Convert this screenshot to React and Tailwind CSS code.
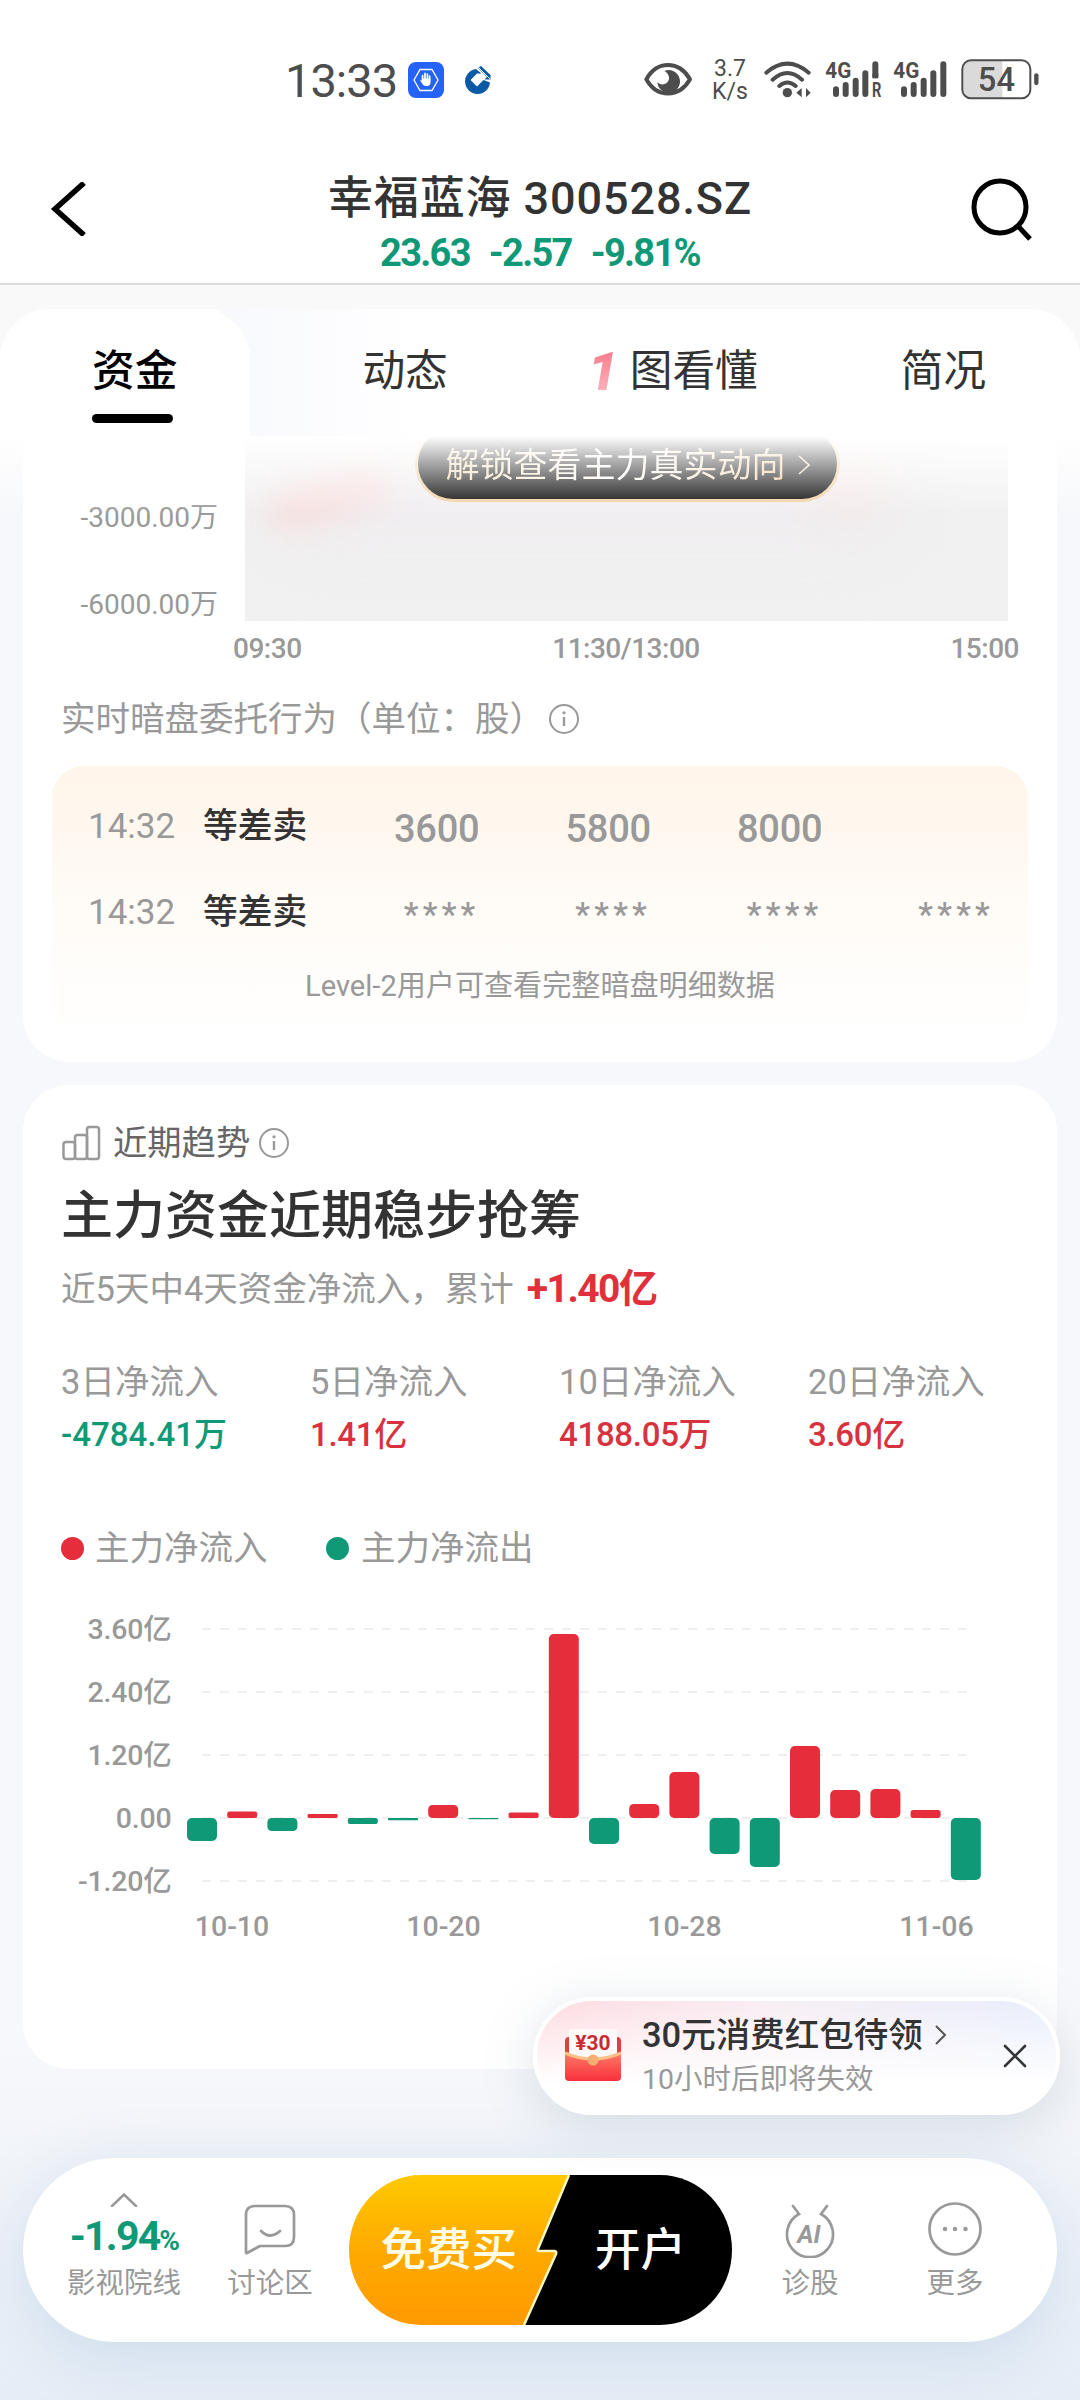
import React from 'react';

const tabs = [
  { name: '资金', className: 'font-medium text-black' },
  { name: '动态', className: 'ml-[185px]' },
  { name: '图看懂', className: '' },
  { name: '简况', className: 'ml-[143px]' },
];

const orders = [
  { id: 1, time: '14:32', type: '等差卖', values: ['3600', '5800', '8000', ''] },
  { id: 2, time: '14:32', type: '等差卖', values: ['****', '****', '****', '****'] },
];

const stats = [
  { label: '3日净流入', value: '-4784.41万', up: false },
  { label: '5日净流入', value: '1.41亿', up: true },
  { label: '10日净流入', value: '4188.05万', up: true },
  { label: '20日净流入', value: '3.60亿', up: true },
];

// bar heights in px, negative = outflow
const flows = [-23, 6.5, -13, 4, -6, -2.3, 13, -1.3, 5.5, 184, -26, 14, 46, -36, -49, 72, 28, 29, 8, -62];
const yLabels = ['3.60亿', '2.40亿', '1.20亿', '0.00', '-1.20亿'];

const InfoIcon = () => (
  <svg width="32" height="32" viewBox="0 0 32 32" fill="none" stroke="#999" strokeWidth="2">
    <circle cx="16" cy="16" r="14" />
    <path d="M16 14v9" strokeWidth="2.4" />
    <circle cx="16" cy="9.8" r="1.6" fill="#999" stroke="none" />
  </svg>
);

const SignalIcon = ({ roaming }) => (
  <svg width="60" height="46" viewBox="582 50 180 138" fill="none" stroke="#4d4d4d" strokeWidth="18" strokeLinecap="round">
    <text x="586" y="113" fontSize="68" fontWeight="700" fill="#4d4d4d" stroke="none" textLength="78" lengthAdjust="spacingAndGlyphs">4G</text>
    <path d="M618 147v14M647 134v27M677 121v40M706 99v62" />
    {roaming ? (
      <>
        <path d="M736 72v33" />
        <path d="M736 100v14" strokeLinecap="butt" />
        <text x="726" y="171" fontSize="60" fontWeight="700" fill="#4d4d4d" stroke="none" textLength="28" lengthAdjust="spacingAndGlyphs">R</text>
      </>
    ) : (
      <path d="M736 72v89" />
    )}
  </svg>
);

const StatusBar = () => (
  <div className="flex h-[160px] items-start pt-[57px] pl-[285px] pr-10 text-[#4d4d4d]">
    <div className="flex h-[46px] items-center">
      <span className="w-[123px] text-[47px] leading-none tracking-[-1px]">13:33</span>
      <svg width="36" height="36" viewBox="0 0 36 36" fill="none">
        <rect width="36" height="36" rx="8" fill="#2463f5" />
        <path d="M12 7.5h12l6 10.5-6 10.5H12L6 18z" stroke="#fff" strokeWidth="1.3" />
        <path d="M14.6 18v-4.5M17 17v-5.6M19.4 17v-5M21.6 18v-4" stroke="#fff" strokeWidth="1.7" strokeLinecap="round" />
        <path d="M13.7 16.5h8.8v4.2c0 2-1.3 3.2-3 3.2h-1.8c-1.8 0-2.6-1-3.5-2.2l-2-3.2c.6-.8 1.5-.2 1.900.5z" fill="#fff" />
      </svg>
      <svg width="28" height="30" viewBox="0 0 28 30" className="ml-5">
        <path d="M26 17.5A12.5 12.5 0 1 1 12 4l5.5 4.5H13L6.500 15l6.500 6.500L19.500 15z" fill="#0a5aa6" />
        <path d="M14 3l3-2 9.500 9v4.500h-6L23 12z" fill="#0a5aa6" />
        <path d="M14.500 2.500L26 14" stroke="#fff" strokeWidth="1" />
      </svg>
    </div>
    <div className="ml-auto flex h-[46px] items-center">
      <svg width="50" height="46" viewBox="40 50 150 138" fill="none">
        <path d="M50 117C82 60 148 60 181 117C148 174 82 174 50 117z" stroke="#4d4d4d" strokeWidth="12" strokeLinejoin="round" />
        <path d="M104 92a34 34 0 1 1-21 33c6 9 22 10 30 1 9-10 6-26-9-34z" fill="#4d4d4d" />
      </svg>
      <div className="ml-[17px] w-10 text-center text-[23px] leading-[23px]">
        <div>3.7</div>
        <div>K/s</div>
      </div>
      <svg width="50" height="46" viewBox="396 50 150 138" fill="none" stroke="#4d4d4d" strokeWidth="12" strokeLinecap="round" className="ml-3">
        <path d="M409 97Q472 43 536 97M428 118Q472 78 516 118M448 137Q472 116 497 137" />
        <circle cx="472" cy="157" r="14" fill="#4d4d4d" stroke="none" />
        <path d="M499 157l16-14v28zM528 143l14 14-14 14z" fill="#4d4d4d" stroke="none" />
      </svg>
      <div className="ml-3"><SignalIcon roaming /></div>
      <div className="ml-2"><SignalIcon /></div>
      <svg width="80" height="46" viewBox="990 50 240 138" className="ml-2">
        <path d="M1020 62h97v111h-97q-20 0-20-22V84q0-22 20-22z" fill="#dadada" />
        <rect x="997" y="60" width="204" height="114" rx="26" fill="none" stroke="#4d4d4d" strokeWidth="6" />
        <text x="1043" y="152" fontSize="98" fontWeight="500" fill="#4d4d4d" textLength="112">54</text>
        <path d="M1219 105v23" stroke="#4d4d4d" strokeWidth="13" strokeLinecap="round" />
      </svg>
    </div>
  </div>
);

const Header = () => (
  <div className="grid h-[125px] grid-cols-[120px_1fr_120px] items-start border-b-2 border-[#dcdcdc]">
    <svg width="36" height="54" viewBox="0 0 36 54" fill="none" className="ml-[50px] mt-[22px]">
      <path d="M34 1L5 27l29 26" stroke="#000" strokeWidth="5.500" />
    </svg>
    <div className="flex flex-col items-center pt-[13px]">
      <div className="text-[45px] font-medium leading-[52px] tracking-[0.900px] text-[#333]">幸福蓝海 300528.SZ</div>
      <div className="mt-[10px] flex gap-[19px] text-[38px] font-bold leading-[36px] tracking-[-1.700px] text-[#0f9977]">
        <span>23.63</span>
        <span>-2.57</span>
        <span>-9.81%</span>
      </div>
    </div>
    <svg width="62" height="64" viewBox="0 0 62 64" fill="none" stroke="#000" strokeWidth="5" className="ml-[11px] mt-[18px]">
      <circle cx="29" cy="29" r="26" />
      <path d="M46 47l13 14" />
    </svg>
  </div>
);

const TabBar = () => (
  <div className="relative z-20 mt-6 h-[127px] rounded-t-[50px] bg-white text-[42.700px] leading-none text-[#333]">
    <div className="absolute left-[220px] top-0 h-[127px] w-[200px] bg-linear-to-r from-[#f8f9fd] to-white"></div>
    <div className="absolute left-0 top-0 h-[127px] w-[250px] rounded-t-[50px] bg-white"></div>
    <div className="relative flex pl-[92px] pt-[41px]">
      {tabs.map((tab, i) => (
        <div key={tab.name} className={tab.className}>
          {i === 2 ? (
            <div className="ml-[140px] flex">
              <span className="w-[42px] bg-linear-to-b from-[#f67a8c] to-[#fbb4be] bg-clip-text text-[54px] font-black italic leading-[44px] text-transparent">1</span>
              {tab.name}
            </div>
          ) : (
            <div>{tab.name}</div>
          )}
          {i === 0 && <div className="mt-[21px] h-[9px] w-[81px] rounded-full bg-black"></div>}
        </div>
      ))}
    </div>
  </div>
);

const OrderCard = () => (
  <div className="relative mx-[23px] h-[626px] rounded-b-[46px] bg-white text-[#999]">
    <div className="flex h-[185px] pr-[49px]">
      <div className="w-[195px] shrink-0 pt-[38px] text-right text-[28px] leading-[87px]">
        <div>-3000.00万</div>
        <div>-6000.00万</div>
      </div>
      <div className="relative ml-[27px] flex-1 overflow-hidden bg-[#f1f1f1]">
        <div className="absolute left-[40px] top-[10px] h-[80px] w-[600px] bg-[#f1ebf0] blur-2xl"></div>
        <div className="absolute left-[20px] top-[36px] h-[44px] w-[130px] -rotate-20 rounded-full bg-[#f6dfdd] blur-lg"></div>
        <div className="absolute left-[570px] top-[10px] h-[60px] w-[70px] rounded-full bg-[#f8e6e3] blur-xl"></div>
        <div className="absolute -top-[10px] left-[170px] flex h-[76px] w-[425px] items-center justify-center gap-3 rounded-full border-[3px] border-[#efcf9f] bg-black pt-[2px]">
          <span className="bg-linear-to-r from-[#f2d3a2] via-white to-[#eec48c] bg-clip-text text-[34px] leading-[40px] text-transparent">解锁查看主力真实动向</span>
          <svg width="12" height="20" viewBox="0 0 12 20" fill="none" stroke="#f0d9b5" strokeWidth="1.600">
            <path d="M1 1l10 9-10 9" />
          </svg>
        </div>
      </div>
    </div>
    <div className="ml-[210px] mr-[38px] flex h-[56px] items-center justify-between text-[28px] font-medium leading-none tracking-[-0.500px]">
      <span>09:30</span>
      <span>11:30/13:00</span>
      <span>15:00</span>
    </div>
    <div className="flex h-[84px] items-center gap-1 pl-[38px] text-[34.500px] leading-none">
      <span>实时暗盘委托行为（单位：股）</span>
      <InfoIcon />
    </div>
    <div className="mx-[29px] mt-[5px] h-[274px] rounded-[32px] bg-linear-to-b from-[#fff5ea] via-[#fffbf6] via-50% to-white pt-[17px]">
      {orders.map((o) => (
        <div key={o.id} className="flex h-[86px] items-center pl-[36px] leading-none">
          <span className="w-[115px] text-[35px]">{o.time}</span>
          <span className="w-[105px] text-[34.700px] font-medium text-[#333]">{o.type}</span>
          {o.values.map((v, i) => (
            <span key={i} className={v === '****' ? 'w-[171.500px] pt-1 text-right text-[33px] font-medium tracking-[4.300px]' : 'w-[171.500px] pt-[6px] text-right text-[38px] font-medium tracking-[-0.200px]'}>
              {v}
            </span>
          ))}
        </div>
      ))}
      <div className="text-center text-[29.100px] leading-[62px]">Level-2用户可查看完整暗盘明细数据</div>
    </div>
  </div>
);

const FlowChart = () => (
  <svg width="1034" height="360" viewBox="23 1590 1034 360" className="absolute left-0 top-[505px]">
    {yLabels.map((label, i) => (
      <g key={label}>
        <path d={`M202 ${1629 + i * 63}H968`} stroke="#efefef" strokeWidth="2" strokeDasharray="9 9" />
        <text x="171.500" y={1639 + i * 63} textAnchor="end" fontSize="28.500" fontWeight="500" fill="#999" letterSpacing="-0.200">{label}</text>
      </g>
    ))}
    {flows.map((v, i) => (
      <rect
        key={i}
        x={187 + i * 40.2}
        y={v > 0 ? 1818 - v : 1818}
        width="30"
        height={Math.abs(v)}
        rx={Math.min(5, Math.abs(v) / 3)}
        fill={v > 0 ? '#e62d3b' : '#0f9977'}
      />
    ))}
    <g fontSize="28.500" fontWeight="500" fill="#999" textAnchor="middle">
      <text x="232" y="1936">10-10</text>
      <text x="443.500" y="1936">10-20</text>
      <text x="684.500" y="1936">10-28</text>
      <text x="936.500" y="1936">11-06</text>
    </g>
  </svg>
);

const TrendCard = () => (
  <div className="relative mx-[23px] mt-[23px] h-[984px] rounded-[46px] bg-white pl-[38px] leading-none text-[#999]">
    <div className="flex h-[90px] items-end text-[34.300px]">
      <svg width="39" height="36" viewBox="0 0 39 36" fill="none" stroke="#999" strokeWidth="2.500" className="mb-[14px] ml-px">
        <rect x="1.500" y="17" width="11.500" height="17" rx="2.500" />
        <rect x="13" y="10" width="12" height="24" rx="2.500" />
        <rect x="25" y="2" width="12" height="32" rx="2.500" />
      </svg>
      <span className="ml-3 mb-[15px] text-[#666]">近期趋势</span>
      <span className="ml-2 mb-4"><InfoIcon /></span>
    </div>
    <div className="h-[80px] text-[52px] font-medium leading-[84px] text-[#333]">主力资金近期稳步抢筹</div>
    <div className="flex h-[68px] items-center text-[34.500px]">
      近5天中4天资金净流入，累计
      <span className="ml-[13px] text-[39px] font-bold tracking-[-1.500px] text-[#e0303c]">+1.40亿</span>
    </div>
    <div className="flex pt-[32px]">
      {stats.map((s) => (
        <div key={s.label} className="w-[249px] shrink-0 last:w-auto">
          <div className="text-[34.500px] leading-[54px]">{s.label}</div>
          <div className={s.up ? 'text-[33px] font-medium leading-[52px] tracking-[-0.300px] text-[#d8323f]' : 'text-[33px] font-medium leading-[52px] text-[#0f9977]'}>{s.value}</div>
        </div>
      ))}
    </div>
    <div className="mt-[65px] flex h-[44px] items-center text-[34.500px]">
      <span className="h-[23px] w-[23px] rounded-full bg-[#e62d3b]"></span>
      <span className="ml-[11px] w-[231px]">主力净流入</span>
      <span className="h-[23px] w-[23px] rounded-full bg-[#0f9977]"></span>
      <span className="ml-3">主力净流出</span>
    </div>
    <FlowChart />
  </div>
);

const CouponToast = () => (
  <div className="absolute left-[533px] top-[1997px] z-20 flex h-[118px] w-[527px] items-center rounded-full border-4 border-white bg-[linear-gradient(180deg,transparent,white_75%),linear-gradient(90deg,#ffdbe1,#f8eef4_45%,#e8eefc)] pl-[27px] shadow-[0_10px_50px_rgba(120,145,165,0.25)]">
    <svg width="58" height="54" viewBox="0 0 58 54">
      <defs>
        <linearGradient id="env" x1="0" y1="0" x2="0" y2="1">
          <stop offset="0" stopColor="#ff7a66" />
          <stop offset="1" stopColor="#f8303c" />
        </linearGradient>
      </defs>
      <rect x="1" y="8" width="56" height="30" rx="4" fill="#e0403c" />
      <rect x="5" y="-1" width="48" height="34" rx="4" fill="#fffaf8" />
      <text x="29" y="20.500" textAnchor="middle" fontSize="21" fontWeight="700" fill="#c92a35">¥30</text>
      <path d="M1 24q28 12 56 0v24q0 4-4 4H5q-4 0-4-4z" fill="url(#env)" />
      <path d="M1 24q28 12 56 0" fill="none" stroke="#fbc187" strokeWidth="3" />
      <circle cx="29" cy="31" r="5.500" fill="#f7ad74" />
    </svg>
    <div className="ml-5 w-[355px] leading-none">
      <div className="flex items-center gap-3 text-[34.500px] font-medium text-[#333]">
        30元消费红包待领
        <svg width="12" height="20" viewBox="0 0 12 20" fill="none" stroke="#555" strokeWidth="2">
          <path d="M1 1l9 9-9 9" />
        </svg>
      </div>
      <div className="mt-[14px] text-[28.500px] text-[#999]">10小时后即将失效</div>
    </div>
    <svg width="24" height="24" viewBox="0 0 24 24" stroke="#333" strokeWidth="2.600" strokeLinecap="round" className="ml-[6px]">
      <path d="M2 2l20 20M22 2L2 22" />
    </svg>
  </div>
);

const BottomNav = () => (
  <div className="absolute left-[23px] top-[2158px] z-10 flex h-[184px] w-[1034px] rounded-full bg-white text-[28.500px] leading-none text-[#999] shadow-[0_14px_60px_rgba(150,185,215,0.32)]">
    <div className="ml-[36px] flex w-[130px] flex-col items-center pt-[35px]">
      <svg width="28" height="14" viewBox="0 0 28 14" fill="none" stroke="#999" strokeWidth="2.500" strokeLinecap="round">
        <path d="M2 13L14 1.500 26 13" />
      </svg>
      <div className="mt-[9px] text-[41px] font-bold tracking-[-1.800px] text-[#0f9977]">
        -1.94<span className="text-[28px]">%</span>
      </div>
      <div className="mt-[13px]">影视院线</div>
    </div>
    <div className="ml-[9px] flex w-[144px] flex-col items-center pt-[45px]">
      <svg width="54" height="54" viewBox="0 0 54 54" fill="none" stroke="#999" strokeWidth="2.700" strokeLinecap="round" strokeLinejoin="round">
        <path d="M12 3h30q9 0 9 9v22q0 9-9 9H17L4 50q-1 .500-1-1V12q0-9 9-9z" />
        <path d="M18 28q9 9 19 0" />
      </svg>
      <div className="mt-[13px]">讨论区</div>
    </div>
    <svg width="383" height="150" viewBox="0 0 383 150" className="ml-[7px] mt-[17px] shrink-0" fontSize="45.500" fontWeight="500">
      <defs>
        <linearGradient id="buy" x1="0" y1="0" x2="0" y2="1">
          <stop offset="0" stopColor="#ffc900" />
          <stop offset="0.500" stopColor="#ffaa00" />
          <stop offset="1" stopColor="#ff9a00" />
        </linearGradient>
      </defs>
      <path d="M150 0h161a72 75 0 0 1 0 150H150z" fill="#000" />
      <path d="M72 0H220L189 74q-1 2 1 2H205q3 0 2 3L175 150H72a72 75 0 0 1 0-150z" fill="url(#buy)" />
      <path d="M220 0L189 74q-1 2 1 2H205q3 0 2 3L175 150" fill="none" stroke="#fff8c0" strokeWidth="2.500" />
      <text x="31.500" y="91" fill="#fffde6">免费买</text>
      <text x="246" y="91" fill="#fff">开户</text>
    </svg>
    <div className="ml-[13px] flex w-[130px] flex-col items-center pt-[44px]">
      <svg width="54" height="56" viewBox="0 0 54 56" fill="none" stroke="#999" strokeWidth="2.700" strokeLinecap="round">
        <path d="M10 4l6 8A23 23 0 1 0 38 12l6-8" />
        <text x="26" y="41" textAnchor="middle" fontSize="25" fontWeight="700" fontStyle="italic" fill="#999" stroke="none">AI</text>
      </svg>
      <div className="mt-[12px]">诊股</div>
    </div>
    <div className="ml-[15px] flex w-[130px] flex-col items-center pt-[43px]">
      <svg width="56" height="56" viewBox="0 0 56 56" fill="none" stroke="#999" strokeWidth="2.700">
        <circle cx="28" cy="28" r="25.500" />
        <path d="M18 28h.01M28 28h.01M38.500 28h.01" strokeWidth="4.500" strokeLinecap="round" />
      </svg>
      <div className="mt-[13px]">更多</div>
    </div>
  </div>
);

const App = () => {
  return (
    <div className="relative h-[2400px] w-[1080px] overflow-hidden bg-linear-to-b from-[#f7f8fb] from-85% to-[#e6edf6] font-['Roboto','Noto_Sans_CJK_SC',sans-serif]">
      <div className="bg-white">
        <StatusBar />
        <Header />
      </div>
      <div className="absolute left-0 top-[285px] h-[151px] w-full bg-[#f9f9f9]"></div>
      <TabBar />
      <div className="relative">
        <OrderCard />
        <div className="absolute left-0 top-0 h-[80px] w-full bg-linear-to-b from-white to-transparent"></div>
      </div>
      <TrendCard />
      <CouponToast />
      <BottomNav />
    </div>
  );
};

export default App;
